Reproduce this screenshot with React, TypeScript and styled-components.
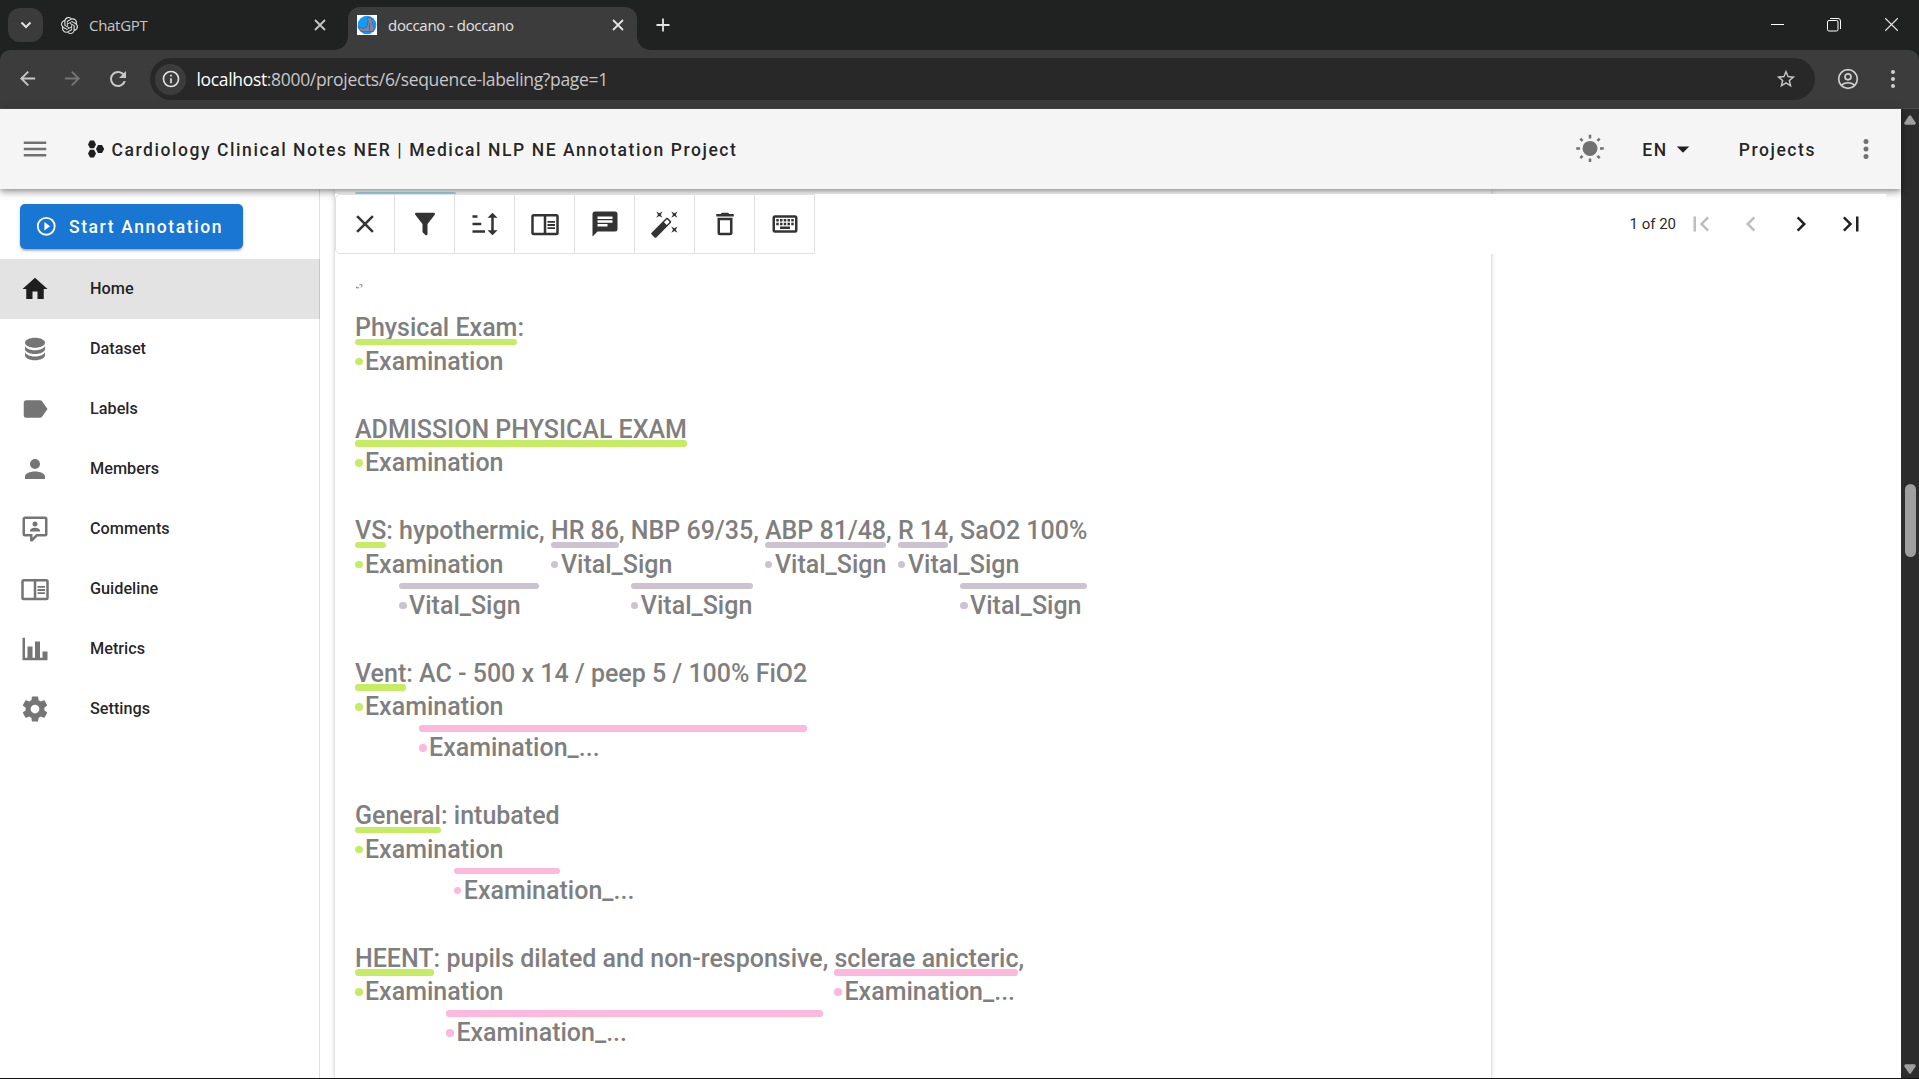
import React from "react";
import styled, { createGlobalStyle, css } from "styled-components";
import { SiOpenai } from "react-icons/si";

const GlobalStyle = createGlobalStyle`
  * { box-sizing: border-box; }
  html, body { margin: 0; height: 100%; overflow: hidden; }
  body { background: #fff; font-family: Roboto, "Noto Sans", sans-serif; color: rgba(0,0,0,.87); }
  #root { height: 100%; }
`;

const icons = {
  menu: "M3,6H21V8H3V6M3,11H21V13H3V11M3,16H21V18H3V16Z",
  sun: "M3.55,18.54L4.96,19.95L6.76,18.16L5.34,16.74M11,22.45C11.32,22.45 13,22.45 13,22.45V19.5H11M12,5.5A6,6 0 0,0 6,11.5A6,6 0 0,0 12,17.5A6,6 0 0,0 18,11.5C18,8.18 15.31,5.5 12,5.5M20,12.5H23V10.5H20M17.24,18.16L19.04,19.95L20.45,18.54L18.66,16.74M20.45,4.46L19.04,3.05L17.24,4.84L18.66,6.26M13,0.55H11V3.5H13M4,10.5H1V12.5H4M6.76,4.84L4.96,3.05L3.55,4.46L5.34,6.26L6.76,4.84Z",
  menuDown: "M7,10L12,15L17,10H7Z",
  dots: "M12,16A2,2 0 0,1 14,18A2,2 0 0,1 12,20A2,2 0 0,1 10,18A2,2 0 0,1 12,16M12,10A2,2 0 0,1 14,12A2,2 0 0,1 12,14A2,2 0 0,1 10,12A2,2 0 0,1 12,10M12,4A2,2 0 0,1 14,6A2,2 0 0,1 12,8A2,2 0 0,1 10,6A2,2 0 0,1 12,4Z",
  left: "M15.41,16.58L10.83,12L15.41,7.41L14,6L8,12L14,18L15.41,16.58Z",
  right: "M8.59,16.58L13.17,12L8.59,7.41L10,6L16,12L10,18L8.59,16.58Z",
  first: "M18.41,16.59L13.82,12L18.41,7.41L17,6L11,12L17,18L18.41,16.59M6,6H8V18H6V6Z",
  last: "M5.59,7.41L10.18,12L5.59,16.59L7,18L13,12L7,6L5.59,7.41M16,6H18V18H16V6Z",
  play: "M12,20C7.59,20 4,16.41 4,12C4,7.59 7.59,4 12,4C16.41,4 20,7.59 20,12C20,16.41 16.41,20 12,20M12,2A10,10 0 0,0 2,12A10,10 0 0,0 12,22A10,10 0 0,0 22,12A10,10 0 0,0 12,2M10,16.5L16,12L10,7.5V16.5Z",
  home: "M10,20V14H14V20H19V12H22L12,3L2,12H5V20H10Z",
  database: "M12,3C7.58,3 4,4.79 4,7C4,9.21 7.58,11 12,11C16.42,11 20,9.21 20,7C20,4.79 16.42,3 12,3M4,9V12C4,14.21 7.58,16 12,16C16.42,16 20,14.21 20,12V9C20,11.21 16.42,13 12,13C7.58,13 4,11.21 4,9M4,14V17C4,19.21 7.58,21 12,21C16.42,21 20,19.21 20,17V14C20,16.21 16.42,18 12,18C7.58,18 4,16.21 4,14Z",
  label: "M17.63,5.84C17.27,5.33 16.67,5 16,5H5A2,2 0 0,0 3,7V17A2,2 0 0,0 5,19H16C16.67,19 17.27,18.66 17.63,18.15L22,12L17.63,5.84Z",
  account: "M12,4A4,4 0 0,1 16,8A4,4 0 0,1 12,12A4,4 0 0,1 8,8A4,4 0 0,1 12,4M12,14C16.42,14 20,15.79 20,18V20H4V18C4,15.79 7.58,14 12,14Z",
  comments: "M9,22A1,1 0 0,1 8,21V18H4A2,2 0 0,1 2,16V4C2,2.89 2.9,2 4,2H20A2,2 0 0,1 22,4V16A2,2 0 0,1 20,18H13.9L10.2,21.71C10,21.9 9.75,22 9.5,22V22H9M10,16V19.08L13.08,16H20V4H4V16H10M16,14H8V13C8,11.67 10.67,11 12,11C13.33,11 16,11.67 16,13V14M12,6A2,2 0 0,1 14,8A2,2 0 0,1 12,10A2,2 0 0,1 10,8A2,2 0 0,1 12,6Z",
  book: "M21,4H3A2,2 0 0,0 1,6V19A2,2 0 0,0 3,21H21A2,2 0 0,0 23,19V6A2,2 0 0,0 21,4M3,19V6H11V19H3M21,19H13V6H21V19M14,9.5H20V11H14V9.5M14,12H20V13.5H14V12M14,14.5H20V16H14V14.5Z",
  chart: "M22,21H2V3H4V19H6V10H10V19H12V6H16V19H18V14H22V21Z",
  cog: "M12,15.5A3.5,3.5 0 0,1 8.5,12A3.5,3.5 0 0,1 12,8.5A3.5,3.5 0 0,1 15.5,12A3.5,3.5 0 0,1 12,15.5M19.43,12.97C19.47,12.65 19.5,12.33 19.5,12C19.5,11.67 19.47,11.34 19.43,11L21.54,9.37C21.73,9.22 21.78,8.95 21.66,8.73L19.66,5.27C19.54,5.05 19.27,4.96 19.05,5.05L16.56,6.05C16.04,5.66 15.5,5.32 14.87,5.07L14.5,2.42C14.46,2.18 14.25,2 14,2H10C9.75,2 9.54,2.18 9.5,2.42L9.13,5.07C8.5,5.32 7.96,5.66 7.44,6.05L4.95,5.05C4.73,4.96 4.46,5.05 4.34,5.27L2.34,8.73C2.21,8.95 2.27,9.22 2.46,9.37L4.57,11C4.53,11.34 4.5,11.67 4.5,12C4.5,12.33 4.53,12.65 4.57,12.97L2.46,14.63C2.27,14.78 2.21,15.05 2.34,15.27L4.34,18.73C4.46,18.95 4.73,19.03 4.95,18.95L7.44,17.94C7.96,18.34 8.5,18.68 9.13,18.93L9.5,21.58C9.54,21.82 9.75,22 10,22H14C14.25,22 14.46,21.82 14.5,21.58L14.87,18.93C15.5,18.67 16.04,18.34 16.56,17.94L19.05,18.95C19.27,19.03 19.54,18.95 19.66,18.73L21.66,15.27C21.78,15.05 21.73,14.78 21.54,14.63L19.43,12.97Z",
  close: "M19,6.41L17.59,5L12,10.59L6.41,5L5,6.41L10.59,12L5,17.59L6.41,19L12,13.41L17.59,19L19,17.59L13.41,12L19,6.41Z",
  filter: "M14,12V19.88C14.04,20.18 13.94,20.5 13.71,20.71C13.32,21.1 12.69,21.1 12.3,20.71L10.29,18.7C10.06,18.47 9.96,18.16 10,17.87V12H9.97L4.21,4.62C3.87,4.19 3.95,3.56 4.38,3.22C4.57,3.08 4.78,3 5,3V3H19V3C19.22,3 19.43,3.08 19.62,3.22C20.05,3.56 20.13,4.19 19.79,4.62L14.03,12H14Z",
  sort: "M19 7H22L18 3L14 7H17V17H14L18 21L22 17H19M2 17H12V19H2M6 5V7H2V5M2 11H9V13H2V11Z",
  message: "M20,2H4A2,2 0 0,0 2,4V22L6,18H20A2,2 0 0,0 22,16V4A2,2 0 0,0 20,2M6,9H18V11H6M14,14H6V12H14M18,8H6V6H18",
  wand: "M7.5,5.6L5,7L6.4,4.5L5,2L7.5,3.4L10,2L8.6,4.5L10,7L7.5,5.6M19.5,15.4L22,14L20.6,16.5L22,19L19.5,17.6L17,19L18.4,16.5L17,14L19.5,15.4M22,2L20.6,4.5L22,7L19.5,5.6L17,7L18.4,4.5L17,2L19.5,3.4L22,2M13.34,12.78L15.78,10.34L13.66,8.22L11.22,10.66L13.34,12.78M14.37,7.29L16.71,9.63C17.1,10 17.1,10.65 16.71,11.04L5.04,22.71C4.65,23.1 4,23.1 3.63,22.71L1.29,20.37C0.9,20 0.9,19.35 1.29,18.96L12.96,7.29C13.35,6.9 14,6.9 14.37,7.29Z",
  trash: "M6,19A2,2 0 0,0 8,21H16A2,2 0 0,0 18,19V7H6V19M8,9H16V19H8V9M15.5,4L14.5,3H9.5L8.5,4H5V6H19V4H15.5Z",
  keyboard: "M4,5A2,2 0 0,0 2,7V17A2,2 0 0,0 4,19H20A2,2 0 0,0 22,17V7A2,2 0 0,0 20,5H4M4,7H20V17H4V7M5,8V10H7V8H5M8,8V10H10V8H8M11,8V10H13V8H11M14,8V10H16V8H14M17,8V10H19V8H17M5,11V13H7V11H5M8,11V13H10V11H8M11,11V13H13V11H11M14,11V13H16V11H14M17,11V13H19V11H17M8,14V16H16V14H8Z",
  arrowLeft: "M20,11V13H8L13.5,18.5L12.08,19.92L4.16,12L12.08,4.08L13.5,5.5L8,11H20Z",
  arrowRight: "M4,11V13H16L10.5,18.5L11.92,19.92L19.84,12L11.92,4.08L10.5,5.5L16,11H4Z",
  reload: "M17.65,6.35C16.2,4.9 14.21,4 12,4A8,8 0 0,0 4,12A8,8 0 0,0 12,20C15.73,20 18.84,17.45 19.73,14H17.65C16.83,16.33 14.61,18 12,18A6,6 0 0,1 6,12A6,6 0 0,1 12,6C13.66,6 15.14,6.69 16.22,7.78L13,11H20V4L17.65,6.35Z",
  star: "M12,15.39L8.24,17.66L9.23,13.38L5.91,10.5L10.29,10.13L12,6.09L13.71,10.13L18.09,10.5L14.77,13.38L15.76,17.66M22,9.24L14.81,8.63L12,2L9.19,8.63L2,9.24L7.45,13.97L5.82,21L12,17.27L18.18,21L16.54,13.97L22,9.24Z",
  info: "M11,9H13V7H11M12,20C7.59,20 4,16.41 4,12C4,7.59 7.59,4 12,4C16.41,4 20,7.59 20,12C20,16.41 16.41,20 12,20M12,2A10,10 0 0,0 2,12A10,10 0 0,0 12,22A10,10 0 0,0 22,12A10,10 0 0,0 12,2M11,17H13V11H11V17Z",
};
type IconName = keyof typeof icons;

const Svg = styled.svg`display: block; flex: none; fill: currentColor;`;
const Icon = ({ name, size = 30, color }: { name: IconName; size?: number; color?: string }) => (
  <Svg width={size} height={size} viewBox="0 0 24 24" color={color}><path d={icons[name]} /></Svg>
);

/* ---------- browser chrome ---------- */
const Screen = styled.div`
  width: 1919px; height: 1079px; display: flex; flex-direction: column; overflow: hidden;
  border-bottom: 1px solid #141414;
`;
const TabStrip = styled.div`
  height: 50px; flex: none; display: flex; background: #202221; color: #e3e3e3; padding-left: 8px;
  font: 15px "Open Sans", "Noto Sans", sans-serif;
`;
const TabSearch = styled.div`
  width: 35px; height: 34px; margin: 8px 0 0; border-radius: 12px; background: #3b3b3b;
  display: flex; align-items: center; justify-content: center;
`;
const Tab = styled.div<{ $active?: boolean }>`
  position: relative; display: flex; align-items: center;
  height: 43px; margin-top: 7px; padding-bottom: 7px;
  ${(p) => p.$active ? css`
    width: 289px; margin-left: 14px; padding-left: 9px; padding-right: 13.5px; background: #3c3c3c; border-radius: 12px 12px 0 0;
    &::before, &::after {
      content: ""; position: absolute; bottom: 0; width: 13px; height: 13px;
    }
    &::before { left: -13px; background: radial-gradient(circle at 0 0, transparent 12.5px, #3c3c3c 13px); }
    &::after { right: -13px; background: radial-gradient(circle at 100% 0, transparent 12.5px, #3c3c3c 13px); }
  ` : css`width: 291px; padding-left: 18px; padding-right: 8px; color: #c7c7c7;`}
`;
const TabTitle = styled.span`flex: 1; margin-left: 11px; white-space: nowrap; letter-spacing: -.3px;`;
const NewTab = styled.div`margin: 15px 0 0 16px; height: 20px;`;
const WindowButtons = styled.div`
  margin-left: auto; display: flex; align-items: center; gap: 43px; padding-right: 20px; height: 49px;
`;
const AddressRow = styled.div`
  height: 59px; flex: none; display: flex; align-items: center; background: #3c3c3c; color: #c7c7c7;
  border-bottom: 1px solid #4a4a4a; border-radius: 10px 10px 0 0; padding: 0 15px;
`;
const ToolbarBack = styled.div`background: #202221; flex: none;`;
const NavButtons = styled.div`display: flex; gap: 22px; width: 135px; align-items: center; padding: 0 0 1px .5px;`;
const Omnibox = styled.div`
  flex: none; width: 1665px; height: 42px; border-radius: 21px; background: #282828; display: flex; align-items: center;
  padding: 0 18px 0 5px;
`;
const SiteInfo = styled.div`
  width: 31px; height: 31px; border-radius: 50%; background: #3c3c3c; display: flex; align-items: center; justify-content: center; color: #e3e3e3;
`;
const Url = styled.div`
  flex: 1; margin-left: 10.5px; padding-bottom: 1px; font: 17.5px "Open Sans", "Noto Sans", sans-serif; color: #c7c7c7; letter-spacing: -.33px;
  b { font-weight: 400; color: #fff; }
`;
const Profile = styled.div`display: flex; align-items: center; gap: 22.5px; margin-left: 21px; color: #d0d0d0;`;

/* ---------- application ---------- */
const Viewport = styled.div`flex: 1; min-height: 0; display: flex;`;
const AppShell = styled.div`flex: 1; display: flex; flex-direction: column; min-width: 0; background: #fff;`;
const AppBar = styled.header`
  position: relative; z-index: 3; height: 80px; flex: none; display: flex; align-items: center; background: #f5f5f5;
  padding: 0 20px; color: rgba(0,0,0,.87);
  box-shadow: 0 2px 5px -1px rgba(0,0,0,.3), 0 5px 6px rgba(0,0,0,.14), 0 1px 12px rgba(0,0,0,.12);
`;
const Muted = styled.span`color: #717171; display: flex;`;
const ProjectName = styled.span`
  display: flex; align-items: center; gap: 7px; margin-left: 36.5px; flex: 1;
  font-size: 17.5px; font-weight: 500; letter-spacing: 1.565px; white-space: nowrap;
`;
const BarLabel = styled.span`padding-top: 2px;`;
const BarButton = styled.span<{ $left: number }>`
  display: flex; align-items: center; margin-left: ${(p) => p.$left}px; font-size: 17.5px; font-weight: 500; letter-spacing: 1.56px;
`;
const Body = styled.div`flex: 1; min-height: 0; display: flex;`;
const Sidebar = styled.nav`width: 320px; flex: none; border-right: 1px solid #e0e0e0; padding-top: 15px;`;
const StartButton = styled.button`
  display: flex; align-items: center; gap: 11.5px; width: 223px; height: 45px; margin: 0 0 10px 20px; padding: 0 0 0 15px;
  border: 0; border-radius: 5px; background: #1976d2; color: #fff; font: 500 17.5px Roboto, sans-serif; letter-spacing: 1.58px;
  white-space: nowrap; box-shadow: 0 3px 2px -2px rgba(0,0,0,.2), 0 2px 2px rgba(0,0,0,.14), 0 1px 5px rgba(0,0,0,.12);
`;
const NavItem = styled.a<{ $active?: boolean }>`
  display: flex; align-items: center; gap: 40px; height: 60px; padding-left: 20px; margin-right: -1px;
  font-size: 16.25px; font-weight: 500; color: rgba(0,0,0,.87);
  background: ${(p) => (p.$active ? "rgba(0,0,0,.11)" : "transparent")};
  svg { color: ${(p) => (p.$active ? "#1e1e1e" : "#757575")}; }
`;
const NavLabel = styled.span`padding-bottom: 2px;`;
const Main = styled.main`flex: 1; min-width: 0; display: flex; padding: 0 0 0 15px;`;
const Card = styled.section`
  width: 1156px; flex: none; display: flex; flex-direction: column;
  box-shadow: 0 3px 1px -2px rgba(0,0,0,.2), 0 2px 2px rgba(0,0,0,.14), 0 1px 6px rgba(0,0,0,.16);
`;
const PriorBar = styled.div`
  height: 5px; flex: none; padding: 3px 0 0 20px;
  &::before { content: ""; display: block; width: 101px; height: 2px; border-radius: 2px 2px 0 0; background: #9ddcf3; }
`;
const ToolRow = styled.div`
  position: relative; z-index: 4; width: 1551px; height: 60px; flex: none; display: flex; align-items: center; background: #fff;
`;
const Tools = styled.div`display: flex; height: 60px; border: 1px solid #e0e0e0; border-radius: 5px 0 0 5px;`;
const Tool = styled.button`
  width: 60px; display: flex; align-items: center; justify-content: center; border: 0; border-right: 1px solid #e0e0e0;
  background: transparent; color: #333; padding: 0 0 1px;
  &:first-child { width: 59px; }
  &:last-child { border-right: 0; width: 59px; }
`;
const Pager = styled.div`
  margin-left: auto; display: flex; align-items: center; gap: 20px; padding-right: 20px; font-size: 15px; white-space: nowrap;
  svg:first-of-type { margin-left: -10px; }
`;
const Document = styled.div`
  padding: 59.2px 0 0 20px; font-size: 25px; font-weight: 500; color: #7f7f7f; line-height: 30px; white-space: pre;
`;
const Line = styled.div<{ $levels: number }>`
  display: flex; height: ${(p) => (p.$levels === 1 ? 101.5 : 142.5)}px;
`;
const Segment = styled.span`display: flex; flex-direction: column; flex: none;`;
const SegmentText = styled.span`height: 25.6px;`;
const Bar = styled.span<{ $color: string; $level: number }>`
  height: 6.25px; flex: none; border-radius: 3px; background: ${(p) => p.$color}; margin-top: ${(p) => (p.$level === 1 ? 0 : 41)}px;
`;
const Caption = styled.span<{ $color: string }>`
  width: 0; display: flex; align-items: center; height: 30px; margin-top: 1.6px;
  &::before { content: ""; width: 7.5px; height: 7.5px; flex: none; border-radius: 50%; background: ${(p) => p.$color}; margin-right: 2.5px; }
`;
const WrapMark = styled.div`position: relative; height: 0; svg { position: absolute; left: 1px; top: -29.2px; }`;

const LIME = "#c6ec64";
const MAUVE = "#cdc2d0";
const PINK = "#fcb8dd";
type Piece = { text: string; label?: string; color?: string; level?: number };
const ex = (text: string): Piece => ({ text, label: "Examination", color: LIME, level: 1 });
const vital = (text: string, level: number): Piece => ({ text, label: "Vital_Sign", color: MAUVE, level });
const result = (text: string, level: number): Piece => ({ text, label: "Examination_...", color: PINK, level });
const t = (text: string): Piece => ({ text });

const lines: { levels: number; pieces: Piece[] }[] = [
  { levels: 1, pieces: [ex("Physical Exam"), t(":")] },
  { levels: 1, pieces: [ex("ADMISSION PHYSICAL EXAM")] },
  { levels: 2, pieces: [ex("VS"), t(": "), vital("hypothermic", 2), t(", "), vital("HR 86", 1), t(", "), vital("NBP 69/35", 2), t(", "), vital("ABP 81/48", 1), t(", "), vital("R 14", 1), t(", "), vital("SaO2 100%", 2)] },
  { levels: 2, pieces: [ex("Vent"), t(": "), result("AC - 500 x 14 / peep 5 / 100% FiO2", 2)] },
  { levels: 2, pieces: [ex("General"), t(": "), result("intubated", 2)] },
  { levels: 2, pieces: [ex("HEENT"), t(": "), result("pupils dilated and non-responsive", 2), t(", "), result("sclerae anicteric", 1), t(",")] },
];

const nav: [IconName, string][] = [
  ["home", "Home"], ["database", "Dataset"], ["label", "Labels"], ["account", "Members"],
  ["comments", "Comments"], ["book", "Guideline"], ["chart", "Metrics"], ["cog", "Settings"],
];
const tools: IconName[] = ["close", "filter", "sort", "book", "message", "wand", "trash", "keyboard"];

const ScrollTrack = styled.div`
  width: 18px; flex: none; background: #2c2c2c; display: flex; flex-direction: column; align-items: center; color: #9f9f9f; padding: 6px 0 4px;
`;
const Thumb = styled.div`width: 11px; height: 73px; border-radius: 6px; background: #9f9f9f; margin: 359px 0 auto;`;

const Cross = ({ size, w = 1.8 }: { size: number; w?: number }) => (
  <svg width={size} height={size} viewBox="0 0 12 12" stroke="currentColor" strokeWidth={w}><path d="M1 1L11 11M11 1L1 11" /></svg>
);

export default function App() {
  return (
    <Screen>
      <GlobalStyle />
      <TabStrip>
        <TabSearch>
          <svg width="12" height="12" viewBox="0 0 12 12" fill="none" stroke="#e3e3e3" strokeWidth="2"><path d="M1.5 3.5L6 8L10.5 3.5" /></svg>
        </TabSearch>
        <Tab>
          <SiOpenai size={17} color="#e3e3e3" />
          <TabTitle>ChatGPT</TabTitle>
          <Cross size={12} />
        </Tab>
        <Tab $active>
          <svg width="20" height="20" viewBox="0 0 20 20">
            <rect width="20" height="20" fill="#fff" /><circle cx="10" cy="10" r="9.3" fill="#109afa" />
            <path d="M10.500 3.200Q12 1.800 13.800 2.800Q15.300 5.500 15.800 9Q18 13.500 16.500 16.300L7 16.800Q3.500 16.800 2.300 13.800L.8 11.800L3.800 12.500Q6.500 14.800 9.500 12.300Q11 9 11.300 5.500L10.200 4.500Z" fill="#8286a3" stroke="#4f5779" strokeWidth=".7" />
            <path d="M13 8Q12 12 12.500 15.500" fill="none" stroke="#4f5779" strokeWidth=".8" />
          </svg>
          <TabTitle>doccano - doccano</TabTitle>
          <Cross size={12} />
        </Tab>
        <NewTab><svg width="20" height="20" viewBox="0 0 20 20" stroke="#e3e3e3" strokeWidth="1.800"><path d="M10 3.500V16.500M3.500 10H16.500" /></svg></NewTab>
        <WindowButtons>
          <svg width="13" height="14" viewBox="0 0 13 14" stroke="#fff"><path d="M0 6.500H13" /></svg>
          <svg width="14" height="14" viewBox="0 0 14 14" fill="none" stroke="#fff"><rect x=".5" y="2.500" width="10.500" height="10.500" rx="1.500" /><path d="M3 .5H11Q13.500 .5 13.500 3V11" /></svg>
          <Cross size={15} w={0.9} />
        </WindowButtons>
      </TabStrip>
      <ToolbarBack>
        <AddressRow>
          <NavButtons>
            <Icon name="arrowLeft" size={23} /><Icon name="arrowRight" size={23} color="#757575" /><Icon name="reload" size={24} />
          </NavButtons>
          <Omnibox>
            <SiteInfo><Icon name="info" size={20} /></SiteInfo>
            <Url><b>localhost</b>:8000/projects/6/sequence-labeling?page=1</Url>
            <Icon name="star" size={22} />
          </Omnibox>
          <Profile>
            <svg width="24" height="24" viewBox="0 0 24 24" fill="none" stroke="currentColor" strokeWidth="1.700"><circle cx="12" cy="12" r="9.300" /><circle cx="12" cy="9.800" r="3" /><path d="M5.500 18Q12 13.500 18.500 18" /></svg>
            <svg width="20" height="20" viewBox="0 0 20 20" fill="currentColor"><circle cx="10" cy="3" r="2" /><circle cx="10" cy="10" r="2" /><circle cx="10" cy="17" r="2" /></svg>
          </Profile>
        </AddressRow>
      </ToolbarBack>
      <Viewport>
        <AppShell>
          <AppBar>
            <Muted><Icon name="menu" /></Muted>
            <ProjectName>
              <svg width="18" height="18" viewBox="0 0 18 18" fill="#1f1f1f"><path d="M3 .5H7L9 4.500L7 8.300H3L1 4.500ZM3 9.700H7L9 13.500L7 17.500H3L1 13.500ZM11 5H15L17.200 9L15 13H11L9 9Z" /></svg>
              <BarLabel>Cardiology Clinical Notes NER | Medical NLP NE Annotation Project</BarLabel>
            </ProjectName>
            <Muted><Icon name="sun" /></Muted>
            <BarButton $left={37}><BarLabel>EN</BarLabel><Icon name="menuDown" /></BarButton>
            <BarButton $left={41}><BarLabel>Projects</BarLabel></BarButton>
            <BarButton $left={35}><Muted><Icon name="dots" /></Muted></BarButton>
          </AppBar>
          <Body>
            <Sidebar>
              <StartButton><Icon name="play" size={22.5} />Start Annotation</StartButton>
              {nav.map(([icon, name], i) => (
                <NavItem key={name} $active={i === 0}><Icon name={icon} /><NavLabel>{name}</NavLabel></NavItem>
              ))}
            </Sidebar>
            <Main>
              <Card>
                <PriorBar />
                <ToolRow>
                  <Tools>{tools.map((name) => <Tool key={name}><Icon name={name} /></Tool>)}</Tools>
                  <Pager>
                    1 of 20
                    <Icon name="first" color="#bdbdbd" /><Icon name="left" color="#bdbdbd" /><Icon name="right" /><Icon name="last" />
                  </Pager>
                </ToolRow>
                <Document>
                  <WrapMark>
                    <svg width="7" height="5" viewBox="0 0 7 5" fill="none" stroke="#6f6f6f" strokeWidth=".8"><path d="M0 3.800H3.200M.6 2.600V4M3.500 .7H6V2.300L4.800 3.200" /></svg>
                  </WrapMark>
                  {lines.map((line, i) => (
                    <Line key={i} $levels={line.levels}>
                      {line.pieces.map((p, j) => (
                        <Segment key={j}>
                          <SegmentText>{p.text}</SegmentText>
                          {p.label && <><Bar $color={p.color!} $level={p.level!} /><Caption $color={p.color!}>{p.label}</Caption></>}
                        </Segment>
                      ))}
                    </Line>
                  ))}
                </Document>
              </Card>
            </Main>
          </Body>
        </AppShell>
        <ScrollTrack>
          <svg width="12" height="10" viewBox="0 0 12 10" fill="currentColor"><path d="M5 .8Q6 -.3 7 .8L11.600 7.500Q12 9.500 10.500 9.800H1.500Q0 9.500 .4 7.500Z" /></svg>
          <Thumb />
          <svg width="12" height="10" viewBox="0 0 12 10" fill="currentColor"><path d="M5 9.200Q6 10.300 7 9.200L11.600 2.500Q12 .5 10.500 .2H1.500Q0 .5 .4 2.500Z" /></svg>
        </ScrollTrack>
      </Viewport>
    </Screen>
  );
}
